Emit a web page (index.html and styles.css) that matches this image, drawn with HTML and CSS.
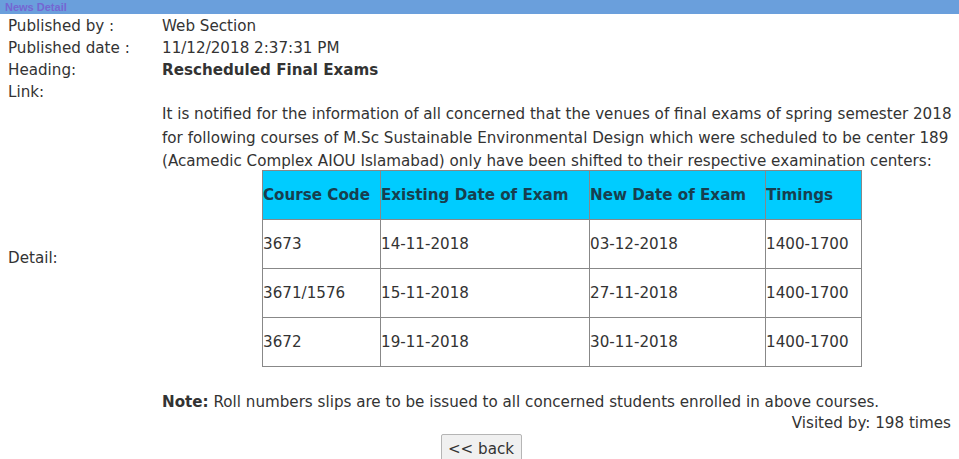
FILE: index.html
```html
<!DOCTYPE html>
<html>
<head>
<meta charset="utf-8">
<link rel="stylesheet" href="styles.css">
</head>
<body>
<div class="titlebar">News Detail</div>
<div class="info">
  <div class="label">Published by :</div><div class="value">Web Section</div>
  <div class="label">Published date :</div><div class="value">11/12/2018 2:37:31 PM</div>
  <div class="label">Heading:</div><div class="value bold">Rescheduled Final Exams</div>
  <div class="label">Link:</div><div class="value"></div>
  <div class="label detail-label">Detail:</div>
  <div class="value detail">
    <p class="intro">It is notified for the information of all concerned that the venues of final exams of spring semester 2018 for following courses of M.Sc Sustainable Environmental Design which were scheduled to be center 189 (Acamedic Complex AIOU Islamabad) only have been shifted to their respective examination centers:</p>
    <table class="exams">
      <tr class="head"><th class="c1">Course Code</th><th class="c2">Existing Date of Exam</th><th class="c3">New Date of Exam</th><th class="c4">Timings</th></tr>
      <tr><td>3673</td><td>14-11-2018</td><td>03-12-2018</td><td>1400-1700</td></tr>
      <tr><td>3671/1576</td><td>15-11-2018</td><td>27-11-2018</td><td>1400-1700</td></tr>
      <tr><td>3672</td><td>19-11-2018</td><td>30-11-2018</td><td>1400-1700</td></tr>
    </table>
    <p class="note"><b>Note:</b> Roll numbers slips are to be issued to all concerned students enrolled in above courses.</p>
  </div>
</div>
<div class="visited">Visited by: 198 times</div>
<div class="actions"><button class="back">&lt;&lt; back</button></div>
</body>
</html>
```
FILE: styles.css
```css
html, body {
  margin: 0;
  padding: 0;
  background: #fff;
  overflow: hidden;
}
body {
  font-family: "DejaVu Sans", Verdana, sans-serif;
  font-size: 15.15px;
  color: #333;
  width: 959px;
}
.titlebar {
  height: 14px;
  background: #6a9fdc;
  color: #7566d2;
  font-family: "Liberation Sans", Arial, sans-serif;
  font-weight: bold;
  font-size: 11px;
  line-height: 14px;
  padding-left: 5px;
}
.info {
  display: grid;
  grid-template-columns: 154px 800px;
  padding-left: 8px;
  padding-top: 1px;
}
.label, .value {
  line-height: 22px;
  min-height: 22px;
  white-space: nowrap;
}
.bold { font-weight: bold; }
.detail-label {
  align-self: center;
}
.detail {
  white-space: normal;
  padding-top: 0;
}
.intro {
  margin: 0 0 -4px 0;
  line-height: 23.5px;
  width: 803px;
}
.exams {
  border-collapse: collapse;
  margin: 0 0 0 100px;
  border: 1px solid #222;
}
.exams th, .exams td {
  border: 1px solid #888;
  height: 48px;
  padding: 0;
  text-align: left;
  vertical-align: middle;
  font-size: 15.15px;
  line-height: 18px;
}
.exams th {
  background: #00ccff;
  color: #173f4f;
  font-weight: bold;
}
.c1 { width: 117px; }
.c2 { width: 208px; }
.c3 { width: 175px; }
.c4 { width: 95px; }
.note {
  margin: 24px 0 0 0;
  line-height: 22px;
}
.visited {
  text-align: right;
  padding-right: 8px;
  line-height: 21px;
}
.actions {
  display: flex;
  justify-content: center;
}
.back {
  font-family: "DejaVu Sans", Verdana, sans-serif;
  font-size: 15.15px;
  color: #333;
  background: #f0f0f0;
  border: 1px solid #b5b5b5;
  border-radius: 2px;
  padding: 0 6px;
  width: 81px;
  height: 30px;
  white-space: nowrap;
  line-height: 28px;
  margin-left: 3px;
}
```
